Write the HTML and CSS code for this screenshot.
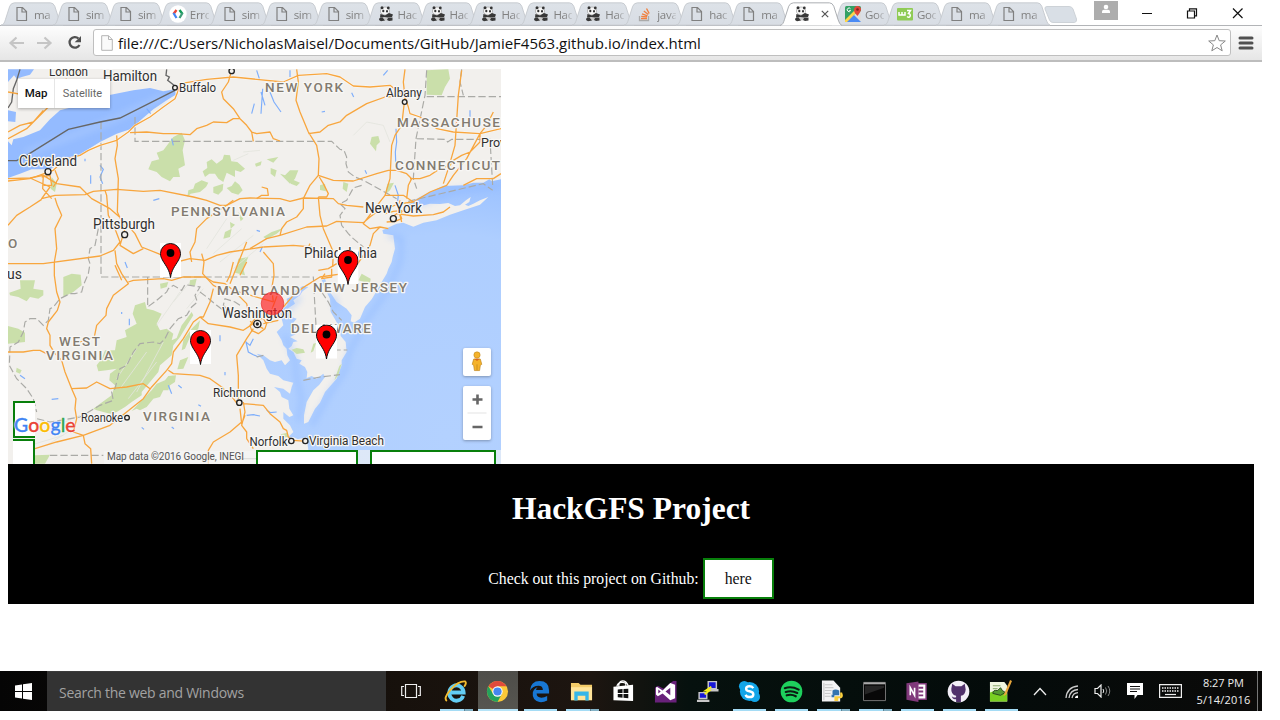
FILE: index.html
```html
<!DOCTYPE html>
<html lang="en">
<head>
<meta charset="utf-8">
<title>HackGFS Project</title>
<link rel="stylesheet" href="styles.css">
</head>
<body>
<svg class="defs" width="0" height="0" aria-hidden="true">
  <defs>
    <linearGradient id="tabfill" x1="0" y1="0" x2="0" y2="1"><stop offset="0" stop-color="#dde2e8"/><stop offset="1" stop-color="#d8dde4"/></linearGradient>
    <symbol id="tab" viewBox="0 0 64 26"><path d="M0 25.5C3 25 3.500 23 4.500 20L9 6Q10.500 2.500 14 2.500H51Q54 2.500 55.500 6L60 20Q61.500 25 64 25.500Z" fill="url(#tabfill)" stroke="#c6cacf"/></symbol>
    <symbol id="tab-on" viewBox="0 0 64 26"><path d="M0 26C3 25 3.500 23 4.500 20L9 6Q10.500 2.500 14 2.500H51Q54 2.500 55.500 6L60 20Q61.500 25 64 26" fill="#fff" stroke="#a8abb0"/></symbol>
    <symbol id="doc" viewBox="0 0 16 16"><path d="M3 1.500H8.500L12.500 5.500V14.500H3ZM8 1.500V6H12.500" fill="none" stroke="#808080" stroke-width="1.200"/></symbol>
    <symbol id="panda" viewBox="0 0 16 16"><ellipse cx="7.500" cy="10" rx="5.500" ry="4.500" fill="#c9c9c9"/><ellipse cx="7" cy="5" rx="4.600" ry="4" fill="#f6f6f6" stroke="#999" stroke-width=".6"/><circle cx="4" cy="1.800" r="1.500" fill="#333"/><circle cx="10.300" cy="2" r="1.400" fill="#333"/><ellipse cx="5.300" cy="5" rx="1.100" ry="1.300" fill="#333"/><ellipse cx="9" cy="5.200" rx="1" ry="1.200" fill="#333"/><path d="M2.500 8L7 9.500L11 7L15 8.500L14 11L10 11.500L6.500 11L2 11.500ZM1.500 12L4.500 11.500L7 14.500L3 15.300L1 14ZM10 12L14.500 11.500L14.500 14.500L11 15L9 14Z" fill="#383838"/></symbol>
    <symbol id="gdev" viewBox="0 0 18 18"><circle cx="9" cy="9" r="8.700" fill="#fff"/><path d="M7.500 5L4.500 9" stroke="#ea4335" stroke-width="2.300"/><path d="M4.500 8L7.500 13" stroke="#4285f4" stroke-width="2.300"/><path d="M10.500 5L13.500 9" stroke="#0f9d58" stroke-width="2.300"/><path d="M13.500 8L10.500 13" stroke="#3f9d78" stroke-width="2.300"/></symbol>
    <symbol id="stack" viewBox="0 0 16 16"><path d="M2.500 10V14.500H11.500V10" fill="none" stroke="#aaa" stroke-width="1.300"/><path d="M4 12.600H10M4.200 10.500L10 11M5 7.800L10.500 9.800M6.800 5L11.300 8.500M9.500 2.500L12.200 7.500" stroke="#f08040" stroke-width="1.400"/></symbol>
    <symbol id="gmaps" viewBox="0 0 16 16"><rect width="16" height="16" rx="1.500" fill="#34a065"/><path d="M16 5V16H10L8 9Z" fill="#dcdcdc"/><path d="M0 16L8 8L16 16Z" fill="#4a8af4"/><path d="M0 14L10 4L12 6L2 16H0Z" fill="#fdd44b"/><path d="M12.500 10Q8.500 6 9 3Q10-.5 13 0Q16.500 1 16 4Q15.500 6 12.500 10Z" fill="#e1473b"/><circle cx="12.500" cy="3.500" r="1.300" fill="#7d241f"/><path d="M5.500 2.800A1.800 1.800 0 1 0 5.600 4.600H4.200" fill="none" stroke="#fff"/></symbol>
    <symbol id="w3" viewBox="0 0 16 16"><rect y="2" width="16" height="12.500" rx="1" fill="#8fcb55"/><path d="M2 6V9H5V6M5 9H8V6M10 4.500H13.500L11.500 7.500Q14 8 13 10.500Q12 12 10 10.500" fill="none" stroke="#fff" stroke-width="1.500"/></symbol>
    <symbol id="pin" viewBox="0 0 21 35"><rect width="21" height="34" fill="#fff"/><path d="M10.500 34.500C9.500 27 6 23 3 18C1 14.500.5 13 .5 10.500A10 10 0 0 1 20.500 10.500C20.500 13 20 14.500 18 18C15 23 11.500 27 10.500 34.500Z" fill="#f00" stroke="#111"/><circle cx="10.500" cy="10" r="3.900"/></symbol>
    <radialGradient id="sea" gradientUnits="userSpaceOnUse" cx="1340" cy="1120" r="840"><stop offset="0" stop-color="#b3d1ff"/><stop offset=".72" stop-color="#aeceff"/><stop offset="1" stop-color="#95bdff"/></radialGradient>
    <filter id="soft" x="-20%" y="-20%" width="140%" height="140%"><feGaussianBlur stdDeviation="9"/></filter>
  </defs>
</svg>

<div class="window">
  <header class="tabstrip">
    <div class="tabs">
      <div class="tab"><svg class="shape"><use href="#tab"/></svg><svg class="fav"><use href="#doc"/></svg><span>ma</span></div>
      <div class="tab"><svg class="shape"><use href="#tab"/></svg><svg class="fav"><use href="#doc"/></svg><span>sim</span></div>
      <div class="tab"><svg class="shape"><use href="#tab"/></svg><svg class="fav"><use href="#doc"/></svg><span>sim</span></div>
      <div class="tab"><svg class="shape"><use href="#tab"/></svg><svg class="fav wide"><use href="#gdev"/></svg><span>Erro</span></div>
      <div class="tab"><svg class="shape"><use href="#tab"/></svg><svg class="fav"><use href="#doc"/></svg><span>sim</span></div>
      <div class="tab"><svg class="shape"><use href="#tab"/></svg><svg class="fav"><use href="#doc"/></svg><span>sim</span></div>
      <div class="tab"><svg class="shape"><use href="#tab"/></svg><svg class="fav"><use href="#doc"/></svg><span>sim</span></div>
      <div class="tab"><svg class="shape"><use href="#tab"/></svg><svg class="fav"><use href="#panda"/></svg><span>Hac</span></div>
      <div class="tab"><svg class="shape"><use href="#tab"/></svg><svg class="fav"><use href="#panda"/></svg><span>Hac</span></div>
      <div class="tab"><svg class="shape"><use href="#tab"/></svg><svg class="fav"><use href="#panda"/></svg><span>Hac</span></div>
      <div class="tab"><svg class="shape"><use href="#tab"/></svg><svg class="fav"><use href="#panda"/></svg><span>Hac</span></div>
      <div class="tab"><svg class="shape"><use href="#tab"/></svg><svg class="fav"><use href="#panda"/></svg><span>Hac</span></div>
      <div class="tab"><svg class="shape"><use href="#tab"/></svg><svg class="fav"><use href="#stack"/></svg><span>java</span></div>
      <div class="tab"><svg class="shape"><use href="#tab"/></svg><svg class="fav"><use href="#doc"/></svg><span>hac</span></div>
      <div class="tab"><svg class="shape"><use href="#tab"/></svg><svg class="fav"><use href="#doc"/></svg><span>ma</span></div>
      <div class="tab active"><svg class="shape"><use href="#tab-on"/></svg><svg class="fav"><use href="#panda"/></svg><svg class="close" viewBox="0 0 8 8"><path d="M.8.8L7.200 7.200M7.200.8L.8 7.200" stroke="#555" stroke-width="1.200"/></svg></div>
      <div class="tab"><svg class="shape"><use href="#tab"/></svg><svg class="fav"><use href="#gmaps"/></svg><span>Goo</span></div>
      <div class="tab"><svg class="shape"><use href="#tab"/></svg><svg class="fav"><use href="#w3"/></svg><span>Goo</span></div>
      <div class="tab"><svg class="shape"><use href="#tab"/></svg><svg class="fav"><use href="#doc"/></svg><span>ma</span></div>
      <div class="tab"><svg class="shape"><use href="#tab"/></svg><svg class="fav"><use href="#doc"/></svg><span>ma</span></div>
    </div>
    <svg class="newtab" viewBox="0 0 34 17"><path d="M3 .5H25Q28 .5 29 3L32.500 13Q33 16 30.500 16.500H9Q6.500 16.500 5.500 14L1 3Q.5.500 3 .5Z" fill="#d9dfe6" stroke="#cdd2d7"/></svg>
    <div class="controls">
      <svg class="user" viewBox="0 0 24 20"><path d="M0 1H24V20H0Z" fill="#adadad"/><circle cx="12" cy="7" r="2.300" fill="#fff"/><path d="M8 13V11.500Q8 9.700 10 9.700H14Q16 9.700 16 11.500V13Z" fill="#fff"/></svg>
      <svg class="winctl" viewBox="0 0 110 12"><path d="M2 6.500H12" stroke="#111" fill="none"/><path d="M47.500 4H54.500V11H47.500ZM49.500 4V1.800H56.500V8.800H54.500" fill="none" stroke="#111" stroke-width="1.200"/><path d="M93 1.500L102.500 11M102.500 1.500L93 11" stroke="#111" stroke-width="1.200"/></svg>
    </div>
  </header>
  <nav class="toolbar">
    <svg class="nav" viewBox="0 0 78 18"><path d="M17 9H4M9.500 3.500L3.500 9L9.500 14.500M30 9H43M37.500 3.500L43.500 9L37.500 14.500" fill="none" stroke="#c5c5c5" stroke-width="2.200"/><path d="M71.500 4.500A5.300 5.300 0 1 0 72.500 11" fill="none" stroke="#505050" stroke-width="2.300"/><path d="M74 2V8.200H67.700Z" fill="#505050"/></svg>
    <div class="address">
      <svg class="page" viewBox="0 0 12 16"><path d="M.7.700H7.500L11.300 4.500V15.300H.7ZM7.500.700V4.500H11.300" fill="#fafafa" stroke="#b4b4b4"/></svg>
      <span class="url">file:///C:/Users/NicholasMaisel/Documents/GitHub/JamieF4563.github.io/index.html</span>
      <svg class="star" viewBox="0 0 18 18"><path d="M9 1L11.200 6.700L17.300 7L12.600 10.900L14.200 16.800L9 13.500L3.800 16.800L5.400 10.900L.7 7L6.800 6.700Z" fill="#fff" stroke="#888"/></svg>
    </div>
    <svg class="menu" viewBox="0 0 16 14"><path d="M2 2H14M2 7H14M2 12H14" stroke="#505050" stroke-width="3" stroke-linecap="round"/></svg>
  </nav>

  <main class="content">
    <section class="map">
      <svg class="geo" viewBox="8 69 493 395">
        <rect x="8" y="69" width="493" height="395" fill="#f2f0ed"/>
        <g transform="translate(0 62) scale(.33333)">
          <!-- parks and forests -->
          <g fill="#cadfaa">
            <path d="M470 272L490 265L520 225L545 212L555 235L548 265L555 310L535 320L540 345L520 345L510 358L485 345L470 330L445 322L455 298L478 292Z"/>
            <path d="M620 300L635 292L650 305L668 292L672 278L690 280L694 298L712 300L735 320L722 330L705 325L705 345L680 332L670 360L655 350L645 335L628 335L615 345L608 328L622 318ZM585 365L605 355L625 362L618 375L600 390L572 395L562 405L565 385L580 380ZM640 375L670 365L668 385L655 398L640 392ZM680 378L695 372L705 358L718 368L728 385L715 398L695 392ZM765 305L785 298L782 310L768 314ZM800 292L835 285L820 302ZM812 318L830 325L825 345L812 335ZM840 335L855 340L870 325L895 325L885 350L870 365L855 350ZM675 510L695 500L690 525L670 530ZM690 480L705 488L692 500ZM715 590L745 585L730 620L735 640L705 632ZM715 450L730 470L722 478Z"/>
            <path d="M1280 25L1345 22L1350 50L1335 75L1325 100L1280 98ZM1115 225L1135 222L1140 240L1130 250L1128 268L1118 255L1110 245ZM1162 365L1182 362L1170 385L1155 398ZM1030 360L1045 365L1040 390L1028 380ZM960 370L975 365L978 388L960 384ZM1085 635L1112 650L1110 665L1075 655ZM790 525L815 510L850 498L830 515L800 532ZM875 352L900 362L890 372L872 365Z"/>
            <path d="M155 345L170 365L165 390L152 380ZM190 645L215 635L242 638L245 670L220 690L190 705ZM60 655L105 655L100 680L130 685L130 700L115 710L90 705L80 718L55 705L30 700L28 692L62 680ZM24 792L55 800L75 812V840L24 845ZM50 917L65 925L60 935L48 930Z"/>
            <path d="M405 730L435 720L440 740L460 745L485 755L470 785L480 805L500 800L520 815L515 835L530 828L545 790L560 770L575 750L580 760L555 800L540 825L520 850L515 880L480 910L475 930L450 960L425 990L425 1000L395 1020L375 1035L350 1050L330 1055L290 1045L280 1040L300 1025L335 1000L345 970L328 955L330 935L350 920L320 925L295 928L290 910L305 890L315 865L345 865L350 835L380 825L375 805L410 785L398 755Z"/>
            <path d="M600 775L595 800L570 825L555 860L545 865L550 835L575 800ZM565 885L550 920L532 922L540 895ZM528 940L525 960L510 970L505 985L490 985L480 1005L460 1010L440 1035L420 1045L410 1040L395 1047L430 1010L455 985L470 965L495 955L505 942ZM105 1180L150 1178L135 1205H100ZM480 665L505 660L500 675L482 680ZM570 655L590 650L585 672L568 668Z"/>
          </g>
          <g fill="none" stroke="#e3e4dd" stroke-width="2.500"><path d="M620 560L680 470M640 575L725 500M660 600L760 520M700 620L790 545M570 660L520 720M540 690L470 790M610 680L560 740M410 860L350 950M440 870L360 980M490 840L410 990M470 900L385 1010M150 1100L240 1060M90 1150L190 1120M140 1150L220 1100M1060 220L1100 180L1150 190L1170 240M745 275L700 295M780 265L730 270"/></g>
          <!-- ocean, bays and sounds -->
          <path fill="url(#sea)" d="M1503 352L1475 358L1468 352L1450 362L1420 362L1390 370L1330 372L1290 390L1250 410L1225 430L1235 438L1262 432L1290 425L1320 426L1345 423L1365 432L1380 430L1398 415L1412 405L1408 420L1395 428L1405 432L1420 425L1440 415L1465 405L1440 428L1390 445L1350 458L1310 475L1270 482L1240 494L1210 482L1190 485L1147 505L1150 515L1180 520L1185 560L1178 585L1175 600L1165 620L1160 635L1145 660L1125 695L1115 712L1095 735L1080 770L1062 782L1052 778L1055 760L1040 740L1010 720L990 690L975 650L965 655L975 680L990 710L992 750L1005 772L1020 800L1022 822L1037 840L1040 870L1025 895L1025 910L1010 950L975 990L960 1022L945 1040L925 1080L912 1085L912 1060L920 1020L940 985L958 968L975 945L970 935L950 950L935 942L920 948L922 930L915 915L898 905L905 895L890 890L880 870L865 860L875 852L880 840L893 838L870 825L890 815L878 808L900 790L880 782L890 770L875 765L870 750L862 740L885 725L880 715L900 700L908 688L925 675L908 672L880 690L872 705L860 710L862 728L840 750L845 770L850 790L840 800L830 810L845 835L850 850L860 860L862 880L870 895L855 910L845 895L825 900L810 895L790 880L770 875L790 895L800 920L810 935L835 942L850 955L880 962L875 975L870 995L850 980L822 975L840 990L845 1005L865 1015L868 1040L880 1060L868 1065L850 1050L850 1070L870 1090L880 1110L860 1130L880 1125L920 1145V1210H1503Z"/>
          <g fill="none" stroke="#88b3ff" stroke-width="13" opacity=".45" filter="url(#soft)"><path d="M1503 372L1360 388L1260 425M1165 520L1205 530L1200 600L1160 690L1098 775L1048 870L1035 925L985 1000L935 1090M860 750L900 705M855 820L885 890L890 950L905 1010L895 1080M1010 740L1000 700"/></g>
          <path fill="#f2f0ed" d="M900 1130L920 1125L925 1165H850V1138Z"/>
          <path d="M1025 905L1015 940L1003 955L1018 912Z" fill="#cadfaa"/><path d="M875 863L890 858L910 862L915 872L890 876ZM940 845L948 843L940 868L932 872ZM842 1117L862 1112L866 1125L845 1127Z" fill="#cadfaa"/>
          <!-- Lake Erie and inland water -->
          <path fill="#94bbff" d="M24 238L35 250L40 232L70 225L120 205L150 172L180 145L245 128L325 100L400 85L450 78L490 88L525 82L527 98L500 115L460 142L425 172L395 200L350 215L300 240L255 268L225 288L180 305L150 322L95 322L60 335L24 348ZM24 22H102L90 38L68 44L50 50L42 40L24 60ZM24 145L48 150L46 180L24 178Z"/>
          <path d="M75 275L180 235L300 190L400 145L490 105" stroke="#a9c9ff" stroke-width="22" fill="none" opacity=".6" filter="url(#soft)"/>
          <g fill="none" stroke="#7eaefb" stroke-width="3.500"><path d="M300 310L310 322L300 345L308 365M272 340V365M255 290V298M460 415L478 410M755 155L763 125M788 80L783 155M783 90L795 130M810 90L822 120L843 150M770 25L778 50M870 25V45M965 150L975 148M1055 92L1061 105M1150 40L1163 25M1188 200L1190 240L1186 270L1188 320M1185 370L1195 400L1192 425M1410 145V165M1095 325L1100 335M388 770V790M365 750V756M660 820V838M675 930V940M505 970L515 995M155 1012L175 1010M425 1096L432 1102M515 1095L522 1100M760 830L750 850L738 840L745 870L760 878L775 885M60 940L75 950M375 600L382 618M740 1060L760 1058L780 1062M780 570L787 555M830 1050L812 1052L800 1045M440 140L452 155M515 230L520 250M770 505L780 508M595 1028L603 1033M535 970L545 978"/></g>
          <!-- administrative boundaries -->
          <g fill="none" stroke="#aaaaa6" stroke-width="3.500" stroke-dasharray="22 9"><path d="M303 180V645H690M405 165V238H995L1020 262L1032 265L1040 285L1038 305L1045 330L1065 345L1090 355L1190 410M1085 370L1060 378L1040 415L1020 425L1035 440L1020 460L1025 490L1045 515L1060 530L1090 555M443 645V735L470 715L500 690L505 680L520 670L545 685L555 668L600 675L585 700L592 720L575 735L560 760L535 770L510 800L495 830L480 845L460 840L420 845L400 870L380 910L360 920L345 980L335 990L340 1015L300 1030L240 1065L200 1072L150 1080L110 1070M600 690L620 705L650 730L670 745L690 750L670 730L675 710L705 720L720 730M690 645H940L944 720L948 790M965 690L985 720L1000 750L1025 775M1280 25L1275 100L1248 230L1240 350L1250 380M1280 104H1503M1250 230L1335 232L1343 240L1355 232H1470L1478 370M1225 418L1450 365L1478 385M1000 864H1042M910 955L960 945L1020 938M150 1180H310M740 1190H780M295 500L290 525L285 550L270 560L265 590L270 605L265 635L250 670L245 690L225 695L210 695L180 710L160 735L150 740L145 775L130 790L110 770L90 770L75 780L70 810L55 840L30 855L28 910L50 950L80 980L100 1010L110 1050M1385 22L1380 60L1390 100M770 885L790 880M725 1190H850"/></g>
          <path d="M24 296H50L80 280L205 202L300 180L360 168L525 85M60 22L50 55L40 80L35 120L24 138M500 22L498 40L508 45L503 55L525 72" fill="none" stroke="#666" stroke-width="4"/>
          <!-- highways -->
          <g fill="none" stroke="#fff" stroke-width="7" opacity=".55"><path id="hw" d="M24 357L90 350L160 325L195 292L240 280L265 265L300 250L350 235L385 210L405 190L450 165L490 135L525 110L535 85L540 65L620 52L700 45L850 60L895 40L980 35L1020 45L1060 72L1110 75L1170 70L1215 105L1225 135L1230 155L1260 165L1310 200L1360 210L1440 215L1503 200"/></g>
          <g fill="none" stroke="#f8a63e" stroke-width="3.900" stroke-linejoin="round">
            <use href="#hw"/>
            <path d="M24 350L90 348L130 340L170 365L240 375L275 410L330 440L370 475L405 515L425 555L475 575L530 600L570 590L615 595L650 580L690 570L790 555M90 348L150 375L125 410L165 400L255 398L280 388L350 382L430 388L480 385L580 405L620 415L660 430L680 430L720 410L750 408L840 410L870 418L910 408L1000 410L1015 425L1040 430L1090 435M24 490L50 460L90 435L125 412M130 340L128 380L155 410M165 325L175 350L160 375M165 408L172 430L185 460L165 500L170 560L163 600V640L170 690L180 720L172 745L145 780L140 800L150 820V850L165 875L185 895L195 930L215 980L228 1010L225 1040L230 1070L220 1110L250 1120L255 1145L272 1160L275 1205M24 605H130L300 582L340 565L360 540L345 500L325 460L320 400L315 385M350 220L352 250L345 290L350 320L355 350L352 450L375 500L360 550L400 575L430 560M345 565L350 605L365 635L385 665L340 700L320 740L318 760L290 790L283 825L240 840M385 660L400 655L490 650L515 655L550 645L615 645L640 660L675 665L700 685M390 212L440 210L490 215L530 215L570 218L590 200L620 190L640 180L680 182L700 170L720 170L740 190L755 210L760 238M755 210L770 215L810 210L820 230L840 237M695 25L685 60L665 90L670 110L700 140L720 170"/>
            <path d="M890 22L895 60L888 115L900 150L925 210L950 250L957 290L955 340L930 370L910 410M955 340L1000 355L1060 357L1130 335L1165 325L1190 325L1220 335L1235 350L1225 370L1220 410M925 215L960 210L985 190L1020 180L1040 160L1100 125L1155 105L1215 100M1215 22L1210 60L1215 105L1205 190L1185 220L1175 250L1170 350L1155 400L1120 445L1090 485L1110 500L1140 495L1165 500M958 345L970 365L985 395L980 405L955 405M910 410L910 440L890 465L860 480L845 500L840 520L800 530L750 560M575 600L570 570L585 540L590 500L620 470L680 430L700 415M770 410L785 400H805L802 380L785 375M840 520L920 495L980 492L1010 478L1090 482L1110 465L1130 450L1170 435L1200 425L1240 420L1290 390L1340 370L1360 340L1400 290L1440 215L1460 190L1480 150M955 405L960 460L970 500L1000 570L998 615M1230 350L1260 350L1290 340L1320 320L1350 310L1360 295L1385 280L1410 270L1440 240V215M1155 400L1210 400L1240 420M1385 25L1375 100L1365 250L1345 320L1330 365M1390 370L1430 350L1480 350L1503 335M1170 470L1190 455L1240 462L1300 458L1330 450L1350 435M1200 415L1195 440L1205 480M1140 495L1120 515L1110 550L1070 610L1030 635L960 645L920 670L905 680L880 700L850 735M790 570L820 605L822 640L815 680L820 720M790 555L880 550L935 555M925 555L930 545M700 685L820 720M605 575L612 600L608 635L640 670L650 675M700 600L690 640L680 660M640 680L630 720L610 765L600 765L580 780L550 830L520 870L515 905L500 925L455 975L430 1010L380 1050L330 1090L250 1120L170 1140L105 1160M600 765L625 785L690 795L730 805L760 785M505 925L520 935L600 940L630 950L665 975L700 1010L715 1030M215 980L260 978L290 960L330 980L380 975L430 965L450 980M24 870L70 870L100 865H120L150 880M760 800L740 830L710 880L715 940V1010M730 1020L735 1050L725 1090L740 1110L740 1130M730 1025L790 1030L810 1055L840 1080L850 1100L860 1105L865 1125L880 1135L920 1138M725 1080L690 1110L640 1140L625 1165V1205M740 1130L760 1160M750 790L765 770L790 770L800 785L795 800L775 815L755 805ZM790 785L835 775M800 770L815 745L835 690M720 1040L725 1085L735 1060M24 210L60 190L100 180L130 145M24 230L80 200L130 150L150 130M24 90L80 100L150 90L200 50M325 120L285 125M220 40L240 25M365 655L345 610M790 800L750 778M700 685L740 725L750 770M690 665L740 540M740 600L720 640"/>
            <path d="M1155 455L1180 448L1210 445L1200 455L1205 470L1185 478L1160 480M955 625L985 620L1010 605M995 620L995 645L965 650L975 635M125 345L150 340L155 370L130 370"/>
          </g>
          <g fill="#f2f0ed" stroke="#222" stroke-width="4"><circle cx="144" cy="329" r="9"/><circle cx="374" cy="518" r="9"/><circle cx="525" cy="77" r="7"/><circle cx="695" cy="27" r="8"/><circle cx="1214" cy="120" r="7"/><circle cx="1180" cy="470" r="9"/><circle cx="772" cy="786" r="11"/><circle cx="381" cy="1067" r="7"/><circle cx="718" cy="1022" r="8"/><circle cx="874" cy="1137" r="8"/><circle cx="916" cy="1137" r="8"/></g>
          <circle cx="772" cy="786" r="5" fill="#222"/>
        </g>
        <g class="states">
          <text x="265" y="91.500" textLength="78">NEW YORK</text><text x="397" y="126.500" textLength="103">MASSACHUSE</text><text x="395" y="170" textLength="105">CONNECTICUT</text><text x="171" y="215.500" textLength="114">PENNSYLVANIA</text><text x="217" y="295" textLength="83">MARYLAND</text><text x="313" y="292" textLength="94">NEW JERSEY</text><text x="291" y="333" textLength="80">DELAWARE</text><text x="59" y="345.500" textLength="41">WEST</text><text x="46" y="359.500" textLength="67">VIRGINIA</text><text x="143" y="421" textLength="67">VIRGINIA</text><text x="8" y="248">O</text>
        </g>
        <g class="cities">
          <text x="49" y="75.500" class="small" textLength="39" lengthAdjust="spacingAndGlyphs">London</text><text x="103" y="81" textLength="54" lengthAdjust="spacingAndGlyphs">Hamilton</text><text x="179" y="92" class="small" textLength="37" lengthAdjust="spacingAndGlyphs">Buffalo</text><text x="386" y="96.500" class="small" textLength="36" lengthAdjust="spacingAndGlyphs">Albany</text><text x="19" y="165.500" textLength="58" lengthAdjust="spacingAndGlyphs">Cleveland</text><text x="93" y="229" textLength="62" lengthAdjust="spacingAndGlyphs">Pittsburgh</text><text x="365" y="212.500" textLength="57" lengthAdjust="spacingAndGlyphs">New York</text><text x="304" y="257.500" textLength="73" lengthAdjust="spacingAndGlyphs">Philadelphia</text><text x="222" y="317.500" textLength="70" lengthAdjust="spacingAndGlyphs">Washington</text><text x="213" y="397" class="small" textLength="53" lengthAdjust="spacingAndGlyphs">Richmond</text><text x="81" y="421.500" class="small" textLength="42" lengthAdjust="spacingAndGlyphs">Roanoke</text><text x="249.500" y="445.500" class="small" textLength="38" lengthAdjust="spacingAndGlyphs">Norfolk</text><text x="309" y="445" class="small" textLength="75" lengthAdjust="spacingAndGlyphs">Virginia Beach</text><text x="481" y="147" class="small">Prov</text><text x="7" y="279">us</text>
        </g>
        <path d="M255 450H501V464H255Z" fill="#f5f5f5" opacity=".65"/>
        <path d="M104 451H255V464H104Z" fill="#f5f5f5" opacity=".7"/>
        <text x="107" y="460" class="credit" textLength="137">Map data ©2016 Google, INEGI</text>
        <circle cx="272.500" cy="303.500" r="11.300" fill="#ff2020" fill-opacity=".68" stroke="#e63535" stroke-width=".7"/>
        <use href="#pin" x="160" y="243" width="21" height="35"/><use href="#pin" x="337.500" y="250" width="21" height="35"/><use href="#pin" x="190" y="330" width="21" height="35"/><use href="#pin" x="316" y="324.500" width="21" height="35"/>
      </svg>
      <div class="maptype"><b>Map</b><span>Satellite</span></div>
      <div class="mapctl">
        <div class="pegman"><svg viewBox="0 0 14 22"><circle cx="7" cy="4.200" r="3.300" fill="#f5b32b" stroke="#bd841d" stroke-width=".6"/><path d="M3.500 8.500H10.500L12 14L10.500 15L9.700 20.500H4.300L3.500 15L2 14Z" fill="#f5b32b" stroke="#bd841d" stroke-width=".7"/><path d="M4 8L7 10.500L10 8Z" fill="#d9661a"/><path d="M7 14V20" stroke="#bd841d" stroke-width=".8"/></svg></div>
        <div class="zoom"><svg viewBox="0 0 28 54"><path d="M14.500 8.500V18.500M9.500 13.500H19.500M9.500 41H19.500" stroke="#666" stroke-width="2.600"/><path d="M4.500 27H23.500" stroke="#e3e3e3"/></svg></div>
      </div>
      <i class="frag frag-a"></i><i class="frag frag-b"></i><i class="frag frag-c"></i><i class="frag frag-d"></i>
      <div class="glogo"><b class="blue">G</b><b class="red">o</b><b class="yellow">o</b><b class="blue">g</b><b class="green">l</b><b class="red">e</b></div>
    </section>
    <section class="project">
      <h1>HackGFS Project</h1>
      <p>Check out this project on Github: <a>here</a></p>
    </section>
  </main>

  <footer class="taskbar">
    <div class="start"><svg viewBox="0 0 17 17"><path d="M0 2.400L7 1.400V8H0ZM8 1.200L17 0V8H8ZM0 9H7V15.500L0 14.600ZM8 9H17V17L8 15.700Z" fill="#fff"/></svg></div>
    <div class="search">Search the web and Windows</div>
    <div class="taskview"><svg viewBox="0 0 20 16"><path d="M4.500 1.500H15.500V14.500H4.500ZM3 3.500H.7V12.500H3M17 3.500H19.300V12.500H17" fill="none" stroke="#eee" stroke-width="1.200"/></svg></div>
    <div class="apps">
      <div class="app run multi"><svg viewBox="0 0 24 24"><path d="M20 16.500A7.500 8 0 1 1 20.500 13H7" fill="none" stroke="#63cdf4" stroke-width="4"/><path d="M3 22Q-1 19 7 10T22 1.500Q24 3 21 7" fill="none" stroke="#f3bc30" stroke-width="2"/></svg></div>
      <div class="app run current"><svg viewBox="0 0 24 24"><circle cx="12" cy="12" r="11" fill="#fbc938"/><path d="M12 12L2.500 6.500A11 11 0 0 1 21.500 6.500H12Z" fill="#e04a3c"/><path d="M2.500 6.500A11 11 0 0 0 12 23L16.500 14.500L12 12L7.500 14.500Z" fill="#24a25c"/><circle cx="12" cy="12" r="5.400" fill="#fff"/><circle cx="12" cy="12" r="4.300" fill="#4586ef"/></svg></div>
      <div class="app run"><svg viewBox="0 0 24 24"><path d="M2 11Q3 1 12 1Q22 1 22 11V14H9Q9 18 14 18.500Q17 18.500 20 16.800V21.500Q16 23.500 12 23Q4 21 5 13Q6 9 10 7.500Q8 9 8.500 10.500H15.500Q15.500 6 11 6Q5 6 2 11Z" fill="#1877d4"/></svg></div>
      <div class="app run multi"><svg viewBox="0 0 24 24"><path d="M1 3H9L11 5H23V21H1Z" fill="#f3cb68"/><path d="M1 7.500H23V21H1Z" fill="#ffe49a"/><path d="M4.500 12H19.500V21.500H16V16.500H8V21.500H4.500Z" fill="#35b6e8"/></svg></div>
      <div class="app"><svg viewBox="0 0 24 24"><path d="M1.500 7L22 5V22L1.500 21Z" fill="#fff"/><path d="M7 7Q7 1 11 1T17 6M5 7Q6 2 11 2.500T14 6" fill="none" stroke="#fff" stroke-width="1.300"/><path d="M6 10L11 9.500V13.500H6ZM12 9.400L17 9V13.500H12ZM6 14.500H11V18.500L6 18ZM12 14.500H17V19L12 18.500Z" fill="#111"/></svg></div>
      <div class="app"><svg viewBox="0 0 24 24"><path d="M1 1H23.500V23.500H1Z" fill="#68217a"/><path d="M1 1H20L16 4L10 9L4 6L1 8Z" fill="#0b120f"/><path d="M3 7L9 11L17 3L22 5V19L17 21L9 14L4 17L2 15V8ZM4.500 10V14L7 12ZM17 8V16L12 12Z" fill="#fff" fill-rule="evenodd"/></svg></div>
      <div class="app"><svg viewBox="0 0 24 24"><path d="M12 1H22V9.500H12ZM2.500 12.500H12V20H2.500ZM11 9.500H23.500V12H11ZM1 20.500H14V23H1Z" fill="#c8c8c8"/><path d="M13.500 2.300H20.500V8.300H13.500ZM4 13.800H10.500V18.500H4Z" fill="#1717d7"/><path d="M16 7L10 11H14L9 15" fill="none" stroke="#f6ee16" stroke-width="1.800"/></svg></div>
      <div class="app run"><svg viewBox="0 0 24 24"><circle cx="12" cy="12" r="10" fill="#12a5e8"/><circle cx="6.500" cy="6.500" r="5.500" fill="#12a5e8"/><circle cx="17.500" cy="17.500" r="5.500" fill="#12a5e8"/><path d="M16 8.500Q14.500 6.500 12 6.500Q8.500 6.500 8.500 9Q8.500 11.200 12 11.700Q16 12.500 16 15Q16 17.800 12 17.800Q9 17.800 7.800 15.500" fill="none" stroke="#fff" stroke-width="2.500"/></svg></div>
      <div class="app run"><svg viewBox="0 0 24 24"><circle cx="12" cy="12" r="11.300" fill="#1ed05d"/><path d="M5 8.500Q12 6 19.500 10M6 12.500Q12 10.500 18 13.500M7 16Q12 14.500 16.500 17" fill="none" stroke="#0b1a12" stroke-width="2.200" stroke-linecap="round"/></svg></div>
      <div class="app run multi"><svg viewBox="0 0 24 24"><path d="M1 .5H13L20 8V22.500H1Z" fill="#f4f4f4"/><path d="M4 5H12M4 8H13M4 11H11M4 14H10M4 17H10M3 3V21" stroke="#c3c3c3"/><path d="M12 16V11Q15 9 19 11V16H14V18H11V15Z" fill="#3475b0"/><path d="M20 13H22Q24 18 21 19H18V22H14V17H20Z" fill="#fbd03e"/></svg></div>
      <div class="app run multi"><svg viewBox="0 0 24 24"><path d="M.5 2.500H23.500V21.500H.5Z" fill="#080808" stroke="#777"/><path d="M1 3.500H23" stroke="#aaa" stroke-width="2"/><path d="M2 6H22V8L2 15Z" fill="#252525"/></svg></div>
      <div class="app run"><svg viewBox="0 0 24 24"><path d="M13 4H22V20H13Z" fill="#fff" stroke="#80397b" stroke-width="1.500"/><path d="M14 8H19M14 12H19M14 16H19" stroke="#80397b" stroke-width="2"/><path d="M1.500 3.500L14 1.500V23L1.500 20.500Z" fill="#80397b"/><path d="M5.500 16V8L10 16V8" fill="none" stroke="#fff" stroke-width="1.700"/></svg></div>
      <div class="app run"><svg viewBox="0 0 24 24"><circle cx="12" cy="12" r="11.300" fill="#f3eff7"/><path d="M5.500 4L9 6.500H15L18.500 4L19.500 10Q19 16 14.500 16.500V23H9.500V20Q6 21 5 17Q7 19 9.500 18V16.500Q4 15 4.500 9Z" fill="#51316b"/></svg></div>
      <div class="app run"><svg viewBox="0 0 24 24"><path d="M1 2H16L19 6V22.500H1Z" fill="#eef5df"/><path d="M1 13Q10 9 19 14V22.500H1Z" fill="#79cf22"/><path d="M4 6H12M4 9H9" stroke="#86a568"/><path d="M4 14Q4 10 9 11L12 8L14 11L17 13L12 16Z" fill="#559b32" stroke="#28461d"/><path d="M22 0L16 14L15 17L18 15L24 1Z" fill="#e8a63b"/></svg></div>
    </div>
    <div class="tray">
      <svg class="chev" viewBox="0 0 14 9"><path d="M1 8L7 1.500L13 8" fill="none" stroke="#eee" stroke-width="1.300"/></svg>
      <svg class="wifi" viewBox="0 0 14 14"><path d="M1 13Q2 2 13 1M4 13Q5 5 13 4.500M7 13Q8 8 13 7.700" fill="none" stroke="#ccc" stroke-width="1.300"/><path d="M10 13Q10 10.500 13 10.500V13Z" fill="#fff"/></svg>
      <svg class="vol" viewBox="0 0 17 14"><path d="M1 4.500H3.500L7 1V13L3.500 9.500H1Z" fill="none" stroke="#eee" stroke-width="1.200"/><path d="M9 5Q10.500 7 9 9" stroke="#eee" fill="none"/><path d="M11.500 3.500Q14 7 11.500 10.500M14 2Q17.500 7 14 12" stroke="#888" fill="none"/></svg>
      <svg class="msg" viewBox="0 0 16 16"><path d="M0 0H16V12H10.500L7.500 16V12H0Z" fill="#fff"/><path d="M3 3.500H13M3 6H13M3 8.500H10" stroke="#111"/></svg>
      <svg class="kbd" viewBox="0 0 23 14"><path d="M.6.600H22.400V13.400H.6Z" fill="none" stroke="#eee" stroke-width="1.200"/><path d="M3 4H20M3 7H20" stroke="#eee" stroke-width="1.500" stroke-dasharray="1.500 1"/><path d="M6 10.500H17" stroke="#eee" stroke-width="1.200"/></svg>
      <div class="clock"><span>8:27 PM</span><span>5/14/2016</span></div>
      <i class="peek"></i>
    </div>
  </footer>
</div>
</body>
</html>
```

FILE: styles.css
```css
* { box-sizing: border-box; }
body { margin: 0; background: #fff; width: 1280px; height: 720px; overflow: hidden; }
svg { display: block; flex: none; }
.defs { position: absolute; }
.window { width: 1262px; height: 711px; display: flex; flex-direction: column; overflow: hidden; }

.tabstrip { height: 26px; display: flex; align-items: flex-start; border-bottom: 1px solid #b2b4b7; font-family: "Open Sans", "Noto Sans", sans-serif; }
.tabs { display: flex; padding-left: 1px; height: 26px; }
.tab { width: 51.95px; height: 26px; display: flex; align-items: center; padding: 2px 0 0 13px; position: relative; flex: none; }
.tab .shape { position: absolute; left: 0; top: 0; width: 62px; height: 26px; z-index: 0; }
.fav { width: 16px; height: 16px; position: relative; z-index: 2; }
.fav.wide { width: 18px; height: 18px; margin: 0 -1px; }
.tab span { position: relative; z-index: 2; margin-left: 4px; width: 19px; overflow: hidden; font-size: 11.5px; letter-spacing: -.3px; line-height: 17px; color: #808080; white-space: nowrap; -webkit-mask-image: linear-gradient(90deg, #000 60%, rgba(0,0,0,.25)); mask-image: linear-gradient(90deg, #000 60%, rgba(0,0,0,.25)); }
.tab.active { z-index: 3; padding-left: 14px; }
.close { width: 8px; height: 8px; position: relative; z-index: 2; margin-left: 11px; }
.newtab { width: 34px; height: 17px; margin: 6px 0 0 4px; }
.controls { display: flex; margin-left: auto; gap: 22px; padding-right: 12px; }
.user { width: 24px; height: 20px; }
.winctl { width: 110px; height: 12px; margin-top: 7px; }

.toolbar { height: 36px; display: flex; align-items: center; padding: 0 8px 1px 7px; border-bottom: 2px solid #bdbdbd; background: linear-gradient(#fdfdfd, #e6e6e6); }
.nav { width: 78px; height: 18px; }
.address { width: 1138px; height: 27px; margin-left: 8px; border: 1px solid #bfbfbf; border-radius: 3px; background: #fff; display: flex; align-items: center; padding: 0 4px 0 7px; }
.page { width: 12px; height: 16px; }
.url { margin-left: 5px; font: 15px/24px "Open Sans", "Noto Sans", sans-serif; color: #111; white-space: nowrap; }
.star { width: 18px; height: 18px; margin-left: auto; }
.menu { width: 16px; height: 14px; margin-left: 7px; }

.content { height: 609px; padding: 7px 8px 0; }
.map { position: relative; width: 493px; height: 395px; overflow: hidden; font-family: Roboto, sans-serif; }
.geo { width: 493px; height: 395px; }
.geo text { paint-order: stroke; stroke: #f8f7f5; stroke-width: 2.5px; stroke-linejoin: round; }
.states { font-size: 13.5px; font-weight: 500; fill: #827b70; }
.cities { font-size: 14px; fill: #303030; }
.cities .small { font-size: 12.5px; }
.geo .credit { font-size: 10px; fill: #555; stroke: none; }
.maptype { position: absolute; left: 10px; top: 10px; height: 29px; display: flex; background: #fff; box-shadow: 0 1px 3px rgba(0,0,0,.3); font-size: 11.5px; line-height: 29px; color: #666; }
.maptype b { width: 37px; text-align: center; color: #111; font-weight: 500; border-right: 1px solid #e6e6e6; }
.maptype span { width: 55px; text-align: center; font-size: 11px; }
.mapctl { position: absolute; left: 455px; top: 279px; display: flex; flex-direction: column; gap: 10px; }
.mapctl div { width: 28px; background: #fff; border-radius: 2px; box-shadow: 0 1px 3px rgba(0,0,0,.3); }
.pegman { height: 28px; padding: 3px 7px; }
.pegman svg { width: 14px; height: 21px; }
.zoom { height: 54px; }
.frag { position: absolute; background: #fff; border: 2px solid #087f0b; }
.frag-a { left: 5px; top: 332px; width: 22px; height: 37px; border-right: 0; }
.frag-b { left: 5px; top: 370px; width: 22px; height: 25px; border-left: 0; border-bottom: 0; }
.frag-c { left: 248px; top: 381px; width: 102px; height: 14px; border-bottom: 0; }
.frag-d { left: 361.500px; top: 381px; width: 126px; height: 14px; border-bottom: 0; }
.glogo { position: absolute; left: 6px; top: 345px; font: 19.5px/22px Lato, sans-serif; display: flex; -webkit-text-stroke: .3px; text-shadow: 0 0 2px #fff, 0 0 2px #fff; }
.glogo b { font-weight: 500; }
.blue { color: #4285f4; } .red { color: #ea4335; } .yellow { color: #fbbc05; } .green { color: #34a853; }

.project { height: 140px; background: #000; color: #fff; text-align: center; font-family: "Liberation Serif", "Times New Roman", serif; overflow: hidden; }
.project h1 { margin: 27px 0 0; font-size: 31.5px; line-height: 36px; }
.project p { margin: 31px 0 0; font-size: 15.75px; line-height: 41px; display: flex; justify-content: center; gap: 4px; }
.project a { width: 71px; height: 41px; border: 2px solid #087f0b; background: #fff; color: #111; line-height: 37px; }

.taskbar { height: 40px; display: flex; background: linear-gradient(90deg, #050505 0, #17110c 400px, #1d1510 590px, #06110e 690px, #040b0a 1000px, #0b0a09 1262px); font-family: "Open Sans", "Noto Sans", sans-serif; }
.start { width: 47px; display: grid; place-items: center; }
.start svg { width: 17px; height: 17px; }
.search { width: 339px; background: #333; color: #a2a2a2; font-size: 14px; letter-spacing: -.28px; line-height: 41px; padding-left: 12px; border-top: 1px solid #3c3c3c; }
.taskview { width: 49px; display: grid; place-items: center; }
.taskview svg { width: 20px; height: 16px; }
.apps { display: flex; }
.app { width: 41.9px; height: 40px; position: relative; display: grid; place-items: center; }
.app svg { width: 23px; height: 23px; }
.run::after { content: ""; position: absolute; left: 5px; bottom: 0; width: 33px; height: 2px; background: #a5dcf5; }
.multi::after { background: linear-gradient(90deg, #a5dcf5 24px, #5f8496 24px 25px, #84b2c6 25px); }
.current { background: linear-gradient(#4e4d49, #575650); background-clip: content-box; padding: 0 1px; }
.current::after { left: 1px; width: 40px; background: #b5e3f7; }
.tray { flex: 1; display: flex; align-items: center; padding-left: 12px; }
.chev { width: 14px; height: 9px; }
.wifi { width: 14px; height: 14px; margin: 2px 0 0 18px; }
.vol { width: 17px; height: 14px; margin-left: 15px; }
.msg { width: 16px; height: 16px; margin-left: 16px; }
.kbd { width: 23px; height: 14px; margin-left: 16px; }
.clock { width: 56px; margin-left: 13px; display: flex; flex-direction: column; align-items: center; color: #eee; font-size: 11px; line-height: 17px; }
.clock span { white-space: nowrap; }
.clock span:last-child { letter-spacing: .2px; }
.peek { width: 1px; height: 40px; margin-left: 6px; background: #777; }
```
